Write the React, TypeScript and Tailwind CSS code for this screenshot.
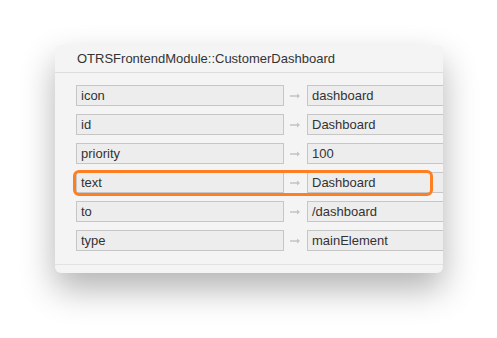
import React from 'react';

const rows = [
  { key: 'icon', value: 'dashboard' },
  { key: 'id', value: 'Dashboard' },
  { key: 'priority', value: '100' },
  { key: 'text', value: 'Dashboard', highlight: true },
  { key: 'to', value: '/dashboard' },
  { key: 'type', value: 'mainElement' },
];

const Arrow = () => (
  <svg width="11" height="6" viewBox="0 0 11 6" className="text-[#c4c4c4]">
    <path d="M0 3h9" stroke="currentColor" strokeWidth="1.3" />
    <path d="M7 0.5l3 2.5-3 2.5z" fill="currentColor" />
  </svg>
);

export default function App() {
  return (
    <div className="w-[497px] h-[338px] bg-white pt-[45px] pl-[55px] font-['Liberation_Sans',Arial,sans-serif]">
      <div className="w-[388px] h-[228px] rounded-[6px] bg-[#f4f4f4] overflow-hidden flex flex-col shadow-[0_16px_34px_rgba(0,0,0,0.3)]">
        {/* Header */}
        <div className="h-[28px] shrink-0 border-b border-[#dcdcdc] flex items-center px-[22px] text-[13px] text-[#333]">
          OTRSFrontendModule::CustomerDashboard
        </div>

        {/* Key / value rows */}
        <div className="flex flex-col gap-[8px] pt-[12px] pb-[13px] pl-[21px]">
          {rows.map((row) => (
            <div key={row.key} className="relative flex items-center h-[21px]">
              <div className="w-[208px] h-full shrink-0 bg-[#ededed] border border-[#c6c6c6] flex items-center px-[4px] text-[13px] text-[#333]">
                {row.key}
              </div>
              <div className="w-[23px] shrink-0 flex justify-center">
                <Arrow />
              </div>
              <div className="w-[180px] h-full shrink-0 bg-[#ededed] border border-[#c6c6c6] flex items-center px-[4px] text-[13px] text-[#333]">
                {row.value}
              </div>
              {row.highlight && (
                <div className="absolute left-[-3px] top-[-2px] w-[360px] h-[26px] border-[3px] border-[#fd7f22] rounded-[6px]" />
              )}
            </div>
          ))}
        </div>

        {/* Footer */}
        <div className="flex-1 border-t border-[#e2e2e2]" />
      </div>
    </div>
  );
}
